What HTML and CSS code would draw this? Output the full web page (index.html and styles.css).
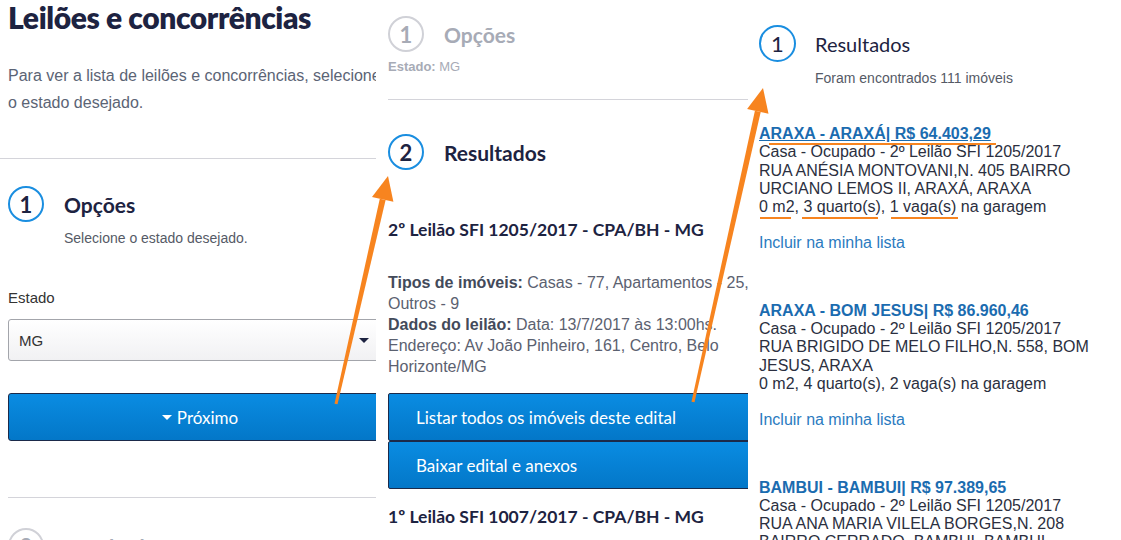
FILE: index.html
```html
<!DOCTYPE html>
<html lang="pt-BR">
<head>
<meta charset="utf-8">
<title>Leilões e concorrências</title>
<link rel="stylesheet" href="styles.css">
</head>
<body>
<div class="stage">
  <section class="panel p1">
    <div class="p1-inner">
      <h1 class="page-title">Leilões e concorrências</h1>
      <p class="intro">Para ver a lista de leilões e concorrências, selecione o estado desejado.</p>
      <hr class="rule rule-full">
      <div class="step step-first">
        <span class="step-num">1</span>
        <span class="step-title">Opções</span>
      </div>
      <p class="step-desc">Selecione o estado desejado.</p>
      <label class="field-label">Estado</label>
      <div class="select"><span>MG</span><span class="caret"></span></div>
      <button class="btn btn-center"><span class="btn-caret"></span>Próximo</button>
      <hr class="rule rule-lower">
      <div class="step step-muted step-next">
        <span class="step-num">2</span>
        <span class="step-title">Resultados</span>
      </div>
    </div>
  </section>

  <section class="panel p2">
    <div class="p2-inner">
      <div class="step step-muted step-top">
        <span class="step-num">1</span>
        <span class="step-title">Opções</span>
      </div>
      <p class="summary"><b>Estado:</b> MG</p>
      <hr class="rule rule-p2">
      <div class="step step-second">
        <span class="step-num">2</span>
        <span class="step-title">Resultados</span>
      </div>
      <h3 class="auction-title">2º Leilão SFI 1205/2017 - CPA/BH - MG</h3>
      <p class="auction-info"><b>Tipos de imóveis:</b> Casas - 77, Apartamentos - 25, Outros - 9<br><b>Dados do leilão:</b> Data: 13/7/2017 às 13:00hs. Endereço: Av João Pinheiro, 161, Centro, Belo Horizonte/MG</p>
      <div class="btn-stack">
        <button class="btn btn-left">Listar todos os imóveis deste edital</button>
        <button class="btn btn-left">Baixar edital e anexos</button>
      </div>
      <h3 class="auction-title auction-next">1º Leilão SFI 1007/2017 - CPA/BH - MG</h3>
    </div>
  </section>

  <section class="panel p3">
    <div class="step step-results">
      <span class="step-num">1</span>
      <span class="step-title">Resultados</span>
    </div>
    <p class="found">Foram encontrados 111 imóveis</p>

    <div class="listing listing-first">
      <a class="listing-title hovered">ARAXA - ARAXÁ| R$ 64.403,29</a>
      <div class="listing-body">Casa - Ocupado - 2º Leilão SFI 1205/2017<br>RUA ANÉSIA MONTOVANI,N. 405 BAIRRO URCIANO LEMOS II, ARAXÁ, ARAXA<br>0 m2, 3 quarto(s), 1 vaga(s) na garagem</div>
      <a class="listing-link">Incluir na minha lista</a>
    </div>

    <div class="listing">
      <a class="listing-title">ARAXA - BOM JESUS| R$ 86.960,46</a>
      <div class="listing-body">Casa - Ocupado - 2º Leilão SFI 1205/2017<br>RUA BRIGIDO DE MELO FILHO,N. 558, BOM JESUS, ARAXA<br>0 m2, 4 quarto(s), 2 vaga(s) na garagem</div>
      <a class="listing-link">Incluir na minha lista</a>
    </div>

    <div class="listing">
      <a class="listing-title">BAMBUI - BAMBUI| R$ 97.389,65</a>
      <div class="listing-body">Casa - Ocupado - 2º Leilão SFI 1205/2017<br>RUA ANA MARIA VILELA BORGES,N. 208 BAIRRO CERRADO, BAMBUI, BAMBUI<br>0 m2, 3 quarto(s), 1 vaga(s) na garagem</div>
    </div>
  </section>

  <svg class="annotations" width="1121" height="540" viewBox="0 0 1121 540" aria-hidden="true">
    <g fill="#f7841f">
      <polygon points="337.5,404.3 334.5,403.7 379.8,198.7 385.6,200.1"/>
      <polygon points="388,176 372,197 393.4,201.8"/>
      <polygon points="694.5,402.3 691.5,401.7 754.9,110.7 760.7,112.1"/>
      <polygon points="763,88 747.1,109 768.5,113.8"/>
      <rect x="769" y="143" width="227" height="2"/>
      <rect x="760" y="217" width="31" height="2"/>
      <rect x="802" y="217" width="76" height="2"/>
      <rect x="891" y="217" width="67" height="2"/>
    </g>
  </svg>
</div>
</body>
</html>
```

FILE: styles.css
```css
* { box-sizing: border-box; }

html, body {
  margin: 0;
  padding: 0;
  background: #ffffff;
}

body {
  font-family: "Liberation Sans", Arial, sans-serif;
  color: #333333;
}

.stage {
  position: relative;
  width: 1121px;
  height: 540px;
  overflow: hidden;
  display: flex;
}

.panel {
  flex: none;
  height: 540px;
  overflow: hidden;
  background: #ffffff;
}

.p1 { width: 376px; }
.p1-inner { width: 392px; padding-left: 8px; }

.p2 { width: 372px; }
.p2-inner { width: 392px; padding-left: 12px; }

.p3 { width: 373px; padding: 0 12px 0 11px; }

/* headings in the geometric brand face */
.page-title,
.step-num,
.step-title,
.auction-title,
.btn {
  font-family: Lato, "Noto Sans", sans-serif;
}

.page-title {
  margin: 0;
  font-size: 30px;
  line-height: 34px;
  font-weight: 800;
  color: #1d2341;
  letter-spacing: -0.4px;
}

.intro {
  margin: 28px 0 0;
  width: 376px;
  font-size: 16px;
  line-height: 27px;
  color: #5b6475;
}

.rule {
  border: 0;
  border-top: 1px solid #d4d4da;
  height: 0;
}

.rule-full { margin: 42px 0 0 -8px; width: 392px; }
.rule-lower { margin: 56px 0 0; }
.rule-p2 { margin: 23px 0 0; }

/* steps */
.step {
  display: flex;
  align-items: center;
  gap: 20px;
}

.step-num {
  flex: none;
  width: 36px;
  height: 36px;
  border: 2px solid #1a8ee0;
  border-radius: 50%;
  display: flex;
  align-items: center;
  justify-content: center;
  font-size: 22px;
  font-weight: 700;
  color: #1d2341;
}

.step-title {
  font-size: 21px;
  font-weight: 700;
  color: #1d2341;
}

.step-muted .step-num {
  border-color: #d0d1d7;
  color: #a7abb6;
}

.step-muted .step-title { color: #a7abb6; }

.step-first { margin-top: 27px; }
.step-next { margin-top: 30px; }
.step-top { margin-top: 16px; }
.step-second { margin-top: 34px; }

.step-results {
  margin-top: 25px;
  gap: 19px;
}

.step-results .step-num {
  width: 37px;
  height: 37px;
  font-weight: 400;
}

.step-results .step-title {
  font-weight: 400;
  font-size: 20px;
}

.step-desc {
  margin: 7px 0 0 56px;
  font-size: 14px;
  line-height: 18px;
  color: #555a66;
}

.field-label {
  display: block;
  margin-top: 41px;
  font-size: 15px;
  line-height: 20px;
  color: #333;
}

.select {
  margin-top: 11px;
  height: 42px;
  border: 1px solid #a3a5ab;
  border-radius: 3px;
  background: linear-gradient(#ffffff, #f1f1f3);
  display: flex;
  align-items: center;
  justify-content: space-between;
  padding: 0 22px 0 10px;
  font-size: 15px;
  color: #333;
}

.caret {
  width: 0;
  height: 0;
  border-left: 5px solid transparent;
  border-right: 5px solid transparent;
  border-top: 5px solid #1d2341;
}

.btn {
  display: flex;
  align-items: center;
  width: 100%;
  height: 48px;
  border: 1px solid #1b2a4a;
  border-radius: 3px;
  background: linear-gradient(#0a8ce2, #0377c8);
  color: #ffffff;
  font-size: 17px;
  padding: 0;
  cursor: pointer;
}

.btn-center {
  margin-top: 32px;
  justify-content: center;
}

.btn-caret {
  width: 0;
  height: 0;
  border-left: 5px solid transparent;
  border-right: 5px solid transparent;
  border-top: 5px solid #ffffff;
  margin-right: 5px;
}

.btn-left {
  padding-left: 27px;
  border-radius: 2px;
}

.btn-stack { margin-top: 16px; }

/* panel 2 */
.summary {
  margin: 6px 0 0;
  font-size: 13px;
  line-height: 18px;
  color: #a7abb6;
}

.auction-title {
  margin: 48px 0 0;
  font-size: 17.5px;
  line-height: 24px;
  font-weight: 700;
  color: #1d2341;
}

.auction-next { margin-top: 16px; }

.auction-info {
  margin: 30px 0 0;
  width: 372px;
  font-size: 16px;
  line-height: 21px;
  color: #5b6170;
}

.auction-info b { color: #434a5a; }

/* panel 3 */
.found {
  margin: 7px 0 0 56px;
  font-size: 14px;
  line-height: 18px;
  color: #555a66;
}

.listing {
  margin-top: 49px;
  font-size: 16px;
  line-height: 18.3px;
}

.listing-first { margin-top: 38px; }

.listing-title {
  display: block;
  font-weight: 700;
  color: #1b6cb0;
}

.listing-title.hovered { text-decoration: underline; }

.listing-body { color: #2b2f40; }

.listing-link {
  display: block;
  margin-top: 18px;
  color: #2b7bbf;
}

.annotations {
  position: absolute;
  left: 0;
  top: 0;
  pointer-events: none;
}
```
